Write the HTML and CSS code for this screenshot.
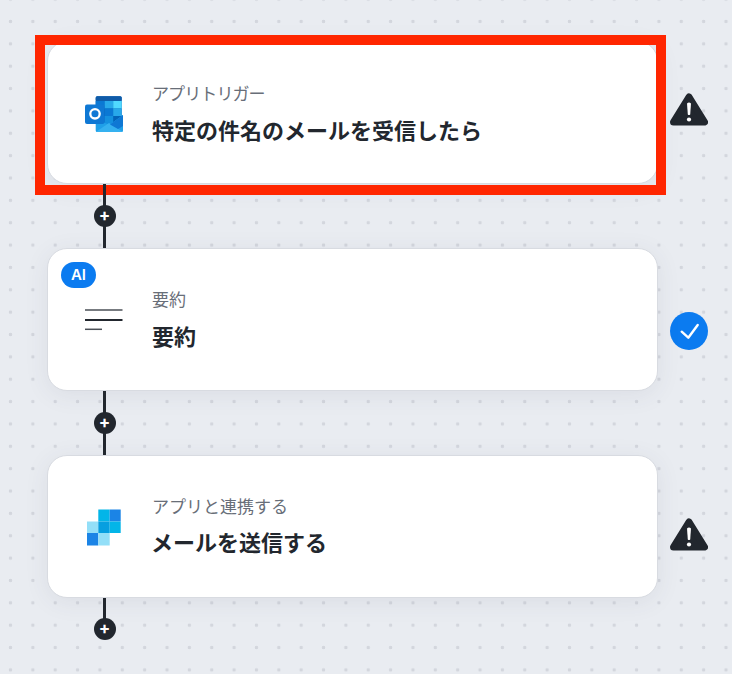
FILE: index.html
```html
<!DOCTYPE html>
<html lang="ja">
<head>
    <meta charset="UTF-8">
    <meta name="viewport" content="width=device-width, initial-scale=1.0">
    <title>フロー</title>
    <link rel="stylesheet" href="styles.css">
</head>
<body>
    <div class="flow">
        <div class="step">
            <div class="card">
                <svg class="app-icon" viewBox="0 0 38 38">
                    <rect x="10.7" y="2.2" width="26" height="28" rx="1.5" fill="#0364b8"/>
                    <rect x="10.7" y="2.2" width="26" height="5" rx="1.5" fill="#0f5ba8"/>
                    <rect x="10.7" y="7" width="9" height="7.5" fill="#0a78d4"/>
                    <rect x="19.7" y="7" width="8.5" height="7.5" fill="#28a8ea"/>
                    <rect x="28.2" y="7" width="8.5" height="7.5" fill="#50d9ff"/>
                    <rect x="19.7" y="14.5" width="8.5" height="7.5" fill="#0a78d4"/>
                    <rect x="28.2" y="14.5" width="8.5" height="7.5" fill="#28a8ea"/>
                    <rect x="10.7" y="22" width="9" height="8" fill="#0a78d4"/>
                    <path d="M19.7 22 H28.2 V30 H19.7 Z" fill="#1490df"/>
                    <path d="M10.7 24 L24 31 L38 21 V36.5 Q38 38 36.5 38 H12.2 Q10.7 38 10.7 36.5 Z" fill="#1f9fe8"/>
                    <path d="M10.7 38 L24 29 L38 38 Z" fill="#35b1f0"/>
                    <path d="M25 30.5 L38 21 V32 L33 35 Z" fill="#0f78d4"/>
                    <rect x="0" y="10.5" width="19.5" height="19.5" rx="2" fill="#0f78d4"/>
                    <circle cx="10" cy="19.8" r="4.7" fill="none" stroke="#fff" stroke-width="2.3"/>
                </svg>
                <div class="card-text">
                    <div class="card-label card-label-tight">アプリトリガー</div>
                    <div class="card-title">特定の件名のメールを受信したら</div>
                </div>
            </div>
            <svg class="status status-first" viewBox="0 0 38 36">
                <path d="M19 5 L34.5 30 H3.5 Z" fill="#22272e" stroke="#22272e" stroke-width="7" stroke-linejoin="round"/>
                <path d="M17 11.5 Q19 9.5 21 11.5 L20.2 22.5 Q19 23.5 17.8 22.5 Z" fill="#fff"/>
                <circle cx="19" cy="27.5" r="2.1" fill="#fff"/>
            </svg>
            <div class="highlight"></div>
        </div>
        <div class="connector"><span class="add">+</span></div>
        <div class="step">
            <div class="card">
                <span class="ai-badge">AI</span>
                <svg class="app-icon" viewBox="0 0 38 38">
                    <path d="M0 9 H37.5" stroke="#4a4f56" stroke-width="1.5"/>
                    <path d="M0 19 H37.5" stroke="#22272e" stroke-width="1.8"/>
                    <path d="M0 28.3 H17" stroke="#4a4f56" stroke-width="1.5"/>
                </svg>
                <div class="card-text card-text-raised">
                    <div class="card-label">要約</div>
                    <div class="card-title">要約</div>
                </div>
            </div>
            <svg class="status status-check" viewBox="0 0 38 38">
                <circle cx="19" cy="19" r="19" fill="#0b7bf0"/>
                <path d="M11.7 19.7 L18.3 25.7 L27.7 13" fill="none" stroke="#fff" stroke-width="2.4" stroke-linecap="round" stroke-linejoin="round"/>
            </svg>
        </div>
        <div class="connector"><span class="add">+</span></div>
        <div class="step">
            <div class="card">
                <svg class="app-icon" viewBox="0 0 38 38">
                    <rect x="13.3" y="1.5" width="11.4" height="12" fill="#03b5e8"/>
                    <rect x="24.7" y="1.5" width="11" height="12" fill="#1b84e6"/>
                    <rect x="2" y="13.5" width="11.3" height="11.5" fill="#93dff8"/>
                    <rect x="13.3" y="13.5" width="11.4" height="11.5" fill="#079fe0"/>
                    <rect x="24.7" y="13.5" width="11" height="11.5" fill="#03b5e8"/>
                    <rect x="2" y="25" width="11.3" height="12.5" fill="#1b84e6"/>
                    <rect x="13.3" y="25" width="11.4" height="12.5" fill="#93dff8"/>
                </svg>
                <div class="card-text card-text-raised">
                    <div class="card-label">アプリと連携する</div>
                    <div class="card-title card-title-close">メールを送信する</div>
                </div>
            </div>
            <svg class="status status-last" viewBox="0 0 38 36">
                <path d="M19 5 L34.5 30 H3.5 Z" fill="#22272e" stroke="#22272e" stroke-width="7" stroke-linejoin="round"/>
                <path d="M17 11.5 Q19 9.5 21 11.5 L20.2 22.5 Q19 23.5 17.8 22.5 Z" fill="#fff"/>
                <circle cx="19" cy="27.5" r="2.1" fill="#fff"/>
            </svg>
        </div>
        <div class="connector connector-last"><span class="add">+</span></div>
    </div>
</body>
</html>
```

FILE: styles.css
```css
body {
    margin: 0;
    height: 674px;
    overflow: hidden;
    font-family: "Noto Sans CJK JP", "Noto Sans", sans-serif;
    color: #22272e;
    background-color: #e9ecf1;
    background-image: radial-gradient(circle, #d3d6dd 1.6px, transparent 2px);
    background-size: 22.37px 22.37px;
    background-position: -0.7px 10.3px;
}

.flow {
    display: flex;
    flex-direction: column;
    padding: 41px 0 0 47px;
}

.step {
    position: relative;
    display: flex;
    align-items: flex-start;
    gap: 12px;
}

.card {
    position: relative;
    box-sizing: border-box;
    width: 611px;
    height: 143px;
    display: flex;
    align-items: center;
    padding-left: 37px;
    background: white;
    border: 1px solid #d8dbe1;
    border-radius: 20px;
    box-shadow: 0 4px 24px rgba(60, 70, 90, 0.08);
}

.app-icon {
    width: 38px;
    height: 38px;
    flex-shrink: 0;
    overflow: visible;
}

.card-text {
    margin-left: 29px;
}

.card-text-raised {
    margin-bottom: 2px;
}

.card-label {
    font-size: 17px;
    line-height: 24px;
    color: #686e78;
}

.card-label-tight {
    letter-spacing: -0.9px;
}

.card-title {
    margin-top: 8px;
    font-size: 22px;
    line-height: 32px;
    font-weight: 700;
}

.card-title-close {
    margin-top: 7px;
    margin-left: -1px;
}

.status {
    width: 38px;
    height: 36px;
    flex-shrink: 0;
}

.status-first {
    margin-top: 51px;
}

.status-check {
    height: 38px;
    margin-top: 64px;
}

.status-last {
    margin-top: 62px;
}

.highlight {
    position: absolute;
    left: -12px;
    top: -6px;
    width: 611px;
    height: 140px;
    border: 10px solid #ff2600;
}

.ai-badge {
    position: absolute;
    left: 13px;
    top: 13px;
    width: 35px;
    height: 26px;
    border-radius: 13px;
    background: #0b7bf0;
    color: white;
    font-family: "Inter", sans-serif;
    font-size: 15px;
    font-weight: 600;
    line-height: 26px;
    text-align: center;
}

.connector {
    position: relative;
    width: 3px;
    height: 64px;
    margin-left: 56px;
    background: #22272e;
}

.connector-last {
    height: 32px;
}

.add {
    position: absolute;
    left: -9.5px;
    top: 21px;
    width: 22px;
    height: 22px;
    border-radius: 50%;
    background: #22272e;
    color: white;
    font-family: "Inter", sans-serif;
    font-size: 17px;
    font-weight: 700;
    line-height: 21px;
    text-align: center;
}

.connector-last .add {
    top: 20px;
}
```
